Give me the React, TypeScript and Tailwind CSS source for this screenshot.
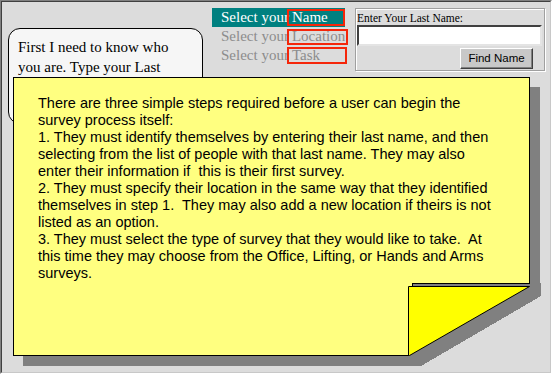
import React from "react";

const serif = { fontFamily: '"Liberation Serif", "Times New Roman", serif' };
const sans = { fontFamily: '"Liberation Sans", Arial, sans-serif' };

const noteLines = [
  "There are three simple steps required before a user can begin the",
  "survey process itself:",
  "1. They must identify themselves by entering their last name, and then",
  "selecting from the list of people with that last name. They may also",
  "enter their information if  this is their first survey.",
  "2. They must specify their location in the same way that they identified",
  "themselves in step 1.  They may also add a new location if theirs is not",
  "listed as an option.",
  "3. They must select the type of survey that they would like to take.  At",
  "this time they may choose from the Office, Lifting, or Hands and Arms",
  "surveys.",
];

export default function App() {
  return (
    <div className="relative w-[552px] h-[374px] bg-[#dcdcdc] border border-t-[#808080] border-l-[#808080] border-b-white border-r-white">
      <div className="w-full h-full border border-t-[#404040] border-l-[#404040] border-b-[#c8c8c8] border-r-[#c8c8c8]">
        <div className="flex items-start pl-[6px] pt-[6px]">
          {/* speech bubble */}
          <div
            className="mt-[20px] w-[195px] h-[96px] rounded-[12px] border border-black bg-[#f6f6f6] pl-[9px] pt-[8px] text-[15px] leading-[20px] text-black"
            style={serif}
          >
            <div className="whitespace-nowrap">First I need to know who</div>
            <div className="whitespace-nowrap">you are. Type your Last</div>
          </div>

          {/* steps */}
          <div className="ml-[9px] w-[136px] flex flex-col text-[15px] leading-[19px]" style={serif}>
            <div className="flex h-[19px] w-[133px] bg-[#008080] pl-[9px] text-white whitespace-nowrap">
              <span>Select your</span>
              <span className="relative w-[56px] pl-[3px]">
                Name
                <span className="absolute -left-[2px] right-0 top-[1px] h-[17px] border-2 border-[#f5260a]" />
              </span>
            </div>
            <div className="flex h-[19px] pl-[9px] text-[#8c8c8c] whitespace-nowrap">
              <span>Select your</span>
              <span className="relative w-[59px] pl-[3px]">
                Location
                <span className="absolute -left-[2px] right-0 top-[2px] h-[16px] border-2 border-[#f5260a]" />
              </span>
            </div>
            <div className="flex h-[19px] pl-[9px] text-[#8c8c8c] whitespace-nowrap">
              <span>Select your</span>
              <span className="relative w-[58px] pl-[3px]">
                Task
                <span className="absolute -left-[2px] right-0 top-[1px] h-[17px] border-2 border-[#f5260a]" />
              </span>
            </div>
          </div>

          {/* group box */}
          <div className="ml-[7px] w-[190px] h-[63px] border border-[#a0a0a0] shadow-[inset_1px_1px_0_#fff,1px_1px_0_#fff] pl-[1px] pt-[3px]">
            <div className="text-[11.5px] leading-[13px] text-black whitespace-nowrap" style={serif}>
              Enter Your Last Name:
            </div>
            <div className="w-[185px] h-[21px] bg-white border-2 border-t-[#404040] border-l-[#404040] border-b-[#e4e4e4] border-r-[#e4e4e4]" />
            <div className="mt-[2px] ml-[103px] w-[73px] h-[21px] flex items-center justify-center bg-[#c8c8c8] border border-t-white border-l-white border-b-[#404040] border-r-[#404040] shadow-[inset_-1px_-1px_0_#808080] text-[11.5px] text-black" style={sans}>
              Find Name
            </div>
          </div>
        </div>
      </div>

      {/* yellow note popup */}
      <div
        className="absolute left-[12px] top-[76px] w-[517px] h-[279px] bg-[#ffff80] border border-black shadow-[10px_10px_0_0_#808080] pl-[24px] pt-[17px] text-[14.5px] leading-[17px] text-black"
        style={sans}
      >
        {noteLines.map((l, i) => (
          <div key={i} className="whitespace-pre">
            {l}
          </div>
        ))}
      </div>

      {/* folded corner */}
      <svg
        className="absolute left-0 top-0 pointer-events-none"
        width={550}
        height={372}
        viewBox="1 1 550 372"
        shapeRendering="crispEdges"
      >
        <polygon points="412,283 549,283 549,370 409,370 409,286 412,286" fill="#dcdcdc" />
        <polygon points="412,283 541,283 541,296 421,366 409,366 409,286 412,286" fill="#808080" />
        <line x1="412" y1="283.5" x2="530" y2="283.5" stroke="#000" />
        <line x1="412.5" y1="283" x2="412.5" y2="287" stroke="#000" />
        <polygon
          points="408.5,286.5 529.5,286.5 409.5,355.5 408.5,355.5"
          fill="#ffff00"
          stroke="#000"
          strokeWidth={1}
          shapeRendering="auto"
        />
      </svg>
    </div>
  );
}
